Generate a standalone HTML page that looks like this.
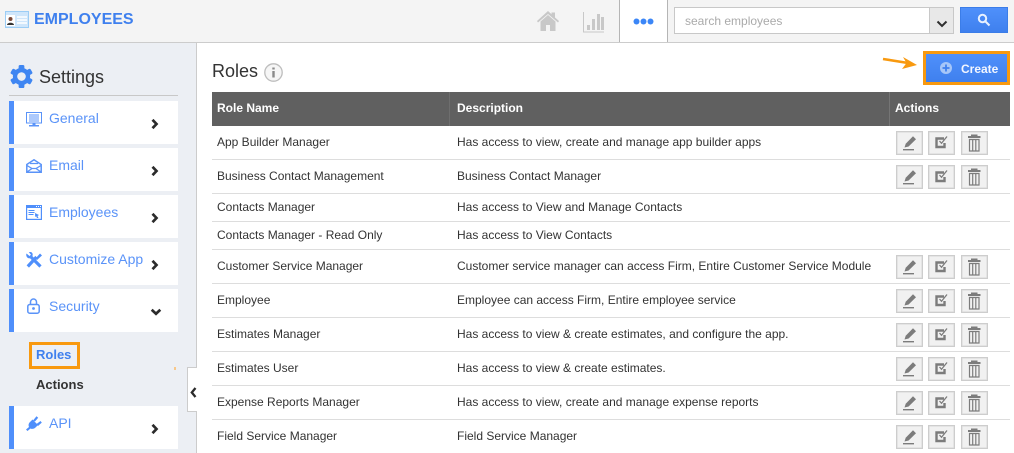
<!DOCTYPE html>
<html><head><meta charset="utf-8"><style>
html,body{margin:0;padding:0}
body{width:1014px;height:453px;position:relative;overflow:hidden;background:#fff;font-family:"Liberation Sans",sans-serif;font-size:12px;color:#333}
.a{position:absolute}
.t{position:absolute;white-space:nowrap;line-height:14px}
.m{position:absolute;left:9px;width:169px;height:43px;background:#fff;border-left:5px solid #4f8ffb;box-sizing:border-box}
.ml{position:absolute;left:49px;font-size:14px;line-height:16px;color:#5a93f8;white-space:nowrap}
.ln{position:absolute;left:212px;width:798px;height:1px;background:#ddd}
.b{position:absolute;width:26px;height:24px;box-sizing:border-box;background:#f1f1f1;border:1px solid #cdcdcd;box-shadow:inset 0 0 0 .5px #d8d8d8}
.b svg{position:absolute;left:0;top:0}
</style></head><body>
<svg width="0" height="0" style="position:absolute">
<symbol id="e" viewBox="0 0 26 22"><path d="M7.500 15.500l1.200-3.800 7.300-7.400 3 3-7.400 7.200z" fill="#7c7c7c"/><rect x="6" y="17" width="11" height="1.400" fill="#7c7c7c"/></symbol>
<symbol id="c" viewBox="0 0 26 22"><path d="M15 6.500H7.500v8.500h8v-4" fill="none" stroke="#7c7c7c" stroke-width="2.400"/><path d="M10.500 9l2 2.300L18 4.500" fill="none" stroke="#7c7c7c" stroke-width="1.300"/></symbol>
<symbol id="d" viewBox="0 0 26 22"><rect x="6" y="4" width="12.500" height="2" fill="#7c7c7c"/><rect x="9" y="2.500" width="6.500" height="1.800" fill="#7c7c7c"/><path d="M7.500 7.500h9.500v11.500h-9.500zM10.700 7.500v11.500M13.800 7.500v11.500" fill="none" stroke="#7c7c7c" stroke-width="1.200"/></symbol>
<symbol id="r" viewBox="0 0 10 12"><path d="M2.500 1.800l4 4.200-4 4.200" fill="none" stroke="#2b2b2b" stroke-width="2.700"/></symbol>
</svg>

<!-- top bar -->
<div class="a" style="left:0;top:0;width:1014px;height:42px;background:#f4f4f4"></div>
<div class="a" style="left:0;top:42px;width:1014px;height:1px;background:#ccc"></div>
<svg class="a" style="left:5px;top:11px" width="24" height="17" viewBox="0 0 24 17"><rect x=".5" y=".5" width="23" height="16" fill="#cfe6fb" stroke="#9ccdf5"/><rect x="1" y="4" width="9" height="11" fill="#fff"/><circle cx="5.500" cy="8" r="2" fill="#7a4a3a"/><path d="M2 14c0-3 7-3 7 0z" fill="#333"/><path d="M12 6h10M12 9h10M12 12h10" stroke="#fff" stroke-width="1.500"/></svg>
<div class="t" style="left:34px;top:11px;font-size:16px;line-height:18px;font-weight:bold;color:#3f80ee">EMPLOYEES</div>
<svg class="a" style="left:537px;top:11px" width="22" height="20" viewBox="0 0 22 20"><path d="M0 10L11 0l3.500 3.200V1.500h3.500v5L22 10l-1 1.500L11 3 1 11.500z" fill="#c8c8c8"/><path d="M3.500 10.500L11 4l7.500 6.500V20H13v-6H9v6H3.500z" fill="#c8c8c8"/></svg>
<svg class="a" style="left:583px;top:12px" width="22" height="21" viewBox="0 0 22 21"><path d="M.5 0v20H21" fill="none" stroke="#c8c8c8"/><rect x="4" y="13" width="3" height="5" fill="#c8c8c8"/><rect x="9" y="7" width="3" height="11" fill="#c8c8c8"/><rect x="14" y="2" width="3" height="16" fill="#c8c8c8"/><rect x="18" y="5" width="3" height="13" fill="#c8c8c8"/></svg>
<div class="a" style="left:619px;top:0;width:47px;height:42px;background:#fff;border-left:1px solid #b5b5b5;border-right:1px solid #b5b5b5"></div>
<svg class="a" style="left:633px;top:18px" width="21" height="7" viewBox="0 0 21 7"><circle cx="3.500" cy="3.500" r="3" fill="#3b86f7"/><circle cx="10.500" cy="3.500" r="3" fill="#3b86f7"/><circle cx="17.500" cy="3.500" r="3" fill="#3b86f7"/></svg>
<div class="a" style="left:674px;top:7px;width:280px;height:27px;box-sizing:border-box;background:#fff;border:1px solid #c8c8c8"></div>
<div class="a" style="left:929px;top:8px;width:24px;height:25px;background:#e8e8e8;border-left:1px solid #c8c8c8;box-sizing:border-box"></div>
<svg class="a" style="left:936px;top:20px" width="12" height="8" viewBox="0 0 12 8"><path d="M1.500 1.500L6 6l4.500-4.500" fill="none" stroke="#2f2f2f" stroke-width="2"/></svg>
<div class="t" style="left:685px;top:14px;color:#aaa;font-size:12px">search employees</div>
<div class="a" style="left:960px;top:7px;width:48px;height:26px;box-sizing:border-box;background:linear-gradient(#4f90fb,#3f80ee);border:1px solid #3b7de8"></div>
<svg class="a" style="left:977px;top:13px" width="14" height="14" viewBox="0 0 14 14"><circle cx="5.500" cy="5.500" r="3.700" fill="none" stroke="#e8f1ff" stroke-width="2"/><path d="M8.500 8.500l4 4" stroke="#e8f1ff" stroke-width="2"/></svg>

<!-- sidebar -->
<div class="a" style="left:0;top:43px;width:196px;height:410px;background:#eceff4;border-right:1px solid #ccc"></div>
<svg class="a" style="left:10px;top:65px" width="23" height="23" viewBox="0 0 24 24"><g fill="#3f86f2"><rect x="9" y="0" width="6" height="24" rx="1.500"/><rect x="9" y="0" width="6" height="24" rx="1.500" transform="rotate(60 12 12)"/><rect x="9" y="0" width="6" height="24" rx="1.500" transform="rotate(120 12 12)"/></g><circle cx="12" cy="12" r="6.500" fill="none" stroke="#3f86f2" stroke-width="5"/><circle cx="12" cy="12" r="4.500" fill="#eceff4"/></svg>
<div class="t" style="left:39px;top:67px;font-size:18px;line-height:21px;color:#333">Settings</div>
<div class="a" style="left:9px;top:95px;width:169px;height:1px;background:#c8c8c8"></div>

<div class="m" style="top:101px"></div><div class="m" style="top:148px"></div><div class="m" style="top:195px"></div><div class="m" style="top:242px"></div><div class="m" style="top:289px"></div><div class="m" style="top:406px"></div>
<div class="ml" style="top:110px">General</div>
<div class="ml" style="top:157px">Email</div>
<div class="ml" style="top:204px">Employees</div>
<div class="ml" style="top:251px">Customize App</div>
<div class="ml" style="top:298px">Security</div>
<div class="ml" style="top:415px">API</div>

<svg class="a" style="left:26px;top:112px" width="16" height="15" viewBox="0 0 16 15"><rect x=".5" y=".5" width="15" height="10.500" fill="#fff" stroke="#5a93f8"/><path d="M3 3h10M3 5h10M3 7h10M3 9h10" stroke="#5a93f8"/><path d="M6.500 11h3v2h-3zM3 13h10v1.500H3z" fill="#5a93f8"/></svg>
<svg class="a" style="left:26px;top:159px" width="16" height="14" viewBox="0 0 16 14"><path d="M.8 5.500L8 .8l7.200 4.700v7.700H.8z" fill="#fff" stroke="#5a93f8" stroke-width="1.500"/><path d="M1 6.500l5 3h4l5-3M1 13l5-3.500M15 13l-5-3.500M4 4.500h8" fill="none" stroke="#5a93f8" stroke-width="1.300"/></svg>
<svg class="a" style="left:26px;top:205px" width="16" height="15" viewBox="0 0 16 15"><rect x=".6" y=".6" width="14.800" height="13.800" fill="#fff" stroke="#4f8ffb" stroke-width="1.200"/><rect x="0" y="0" width="16" height="3" fill="#4f8ffb"/><path d="M10 1.500h1M12 1.500h1M14 1.500h1" stroke="#fff"/><path d="M2.500 5.500h6M2.500 7.500h6M2.500 9.500h5" stroke="#4f8ffb" stroke-width="1.100"/><path d="M9 8l4 2-1.500 1 1 2h-1.500l-.8-1.800-1 .8z" fill="#4f8ffb"/></svg>
<svg class="a" style="left:26px;top:252px" width="16" height="16" viewBox="0 0 16 16"><path d="M1.800 14.500L10.500 5" stroke="#4f8ffb" stroke-width="3.200"/><path d="M9.500 6.500l4.500-5 2 2-5 4.500z" fill="#4f8ffb"/><path d="M14.500 14.500L5 5" stroke="#4f8ffb" stroke-width="3.200"/><path d="M.5 1.500L3.500 4 5 2.800 2.800.3c2.500-1 4.500.7 3.700 3.500L4 6.300C1.500 6.800-.5 4 .5 1.500z" fill="#4f8ffb"/></svg>
<svg class="a" style="left:27px;top:298px" width="13" height="16" viewBox="0 0 13 16"><path d="M3.500 7V4a3 3 0 0 1 6 0v3" fill="none" stroke="#5a93f8" stroke-width="1.500"/><rect x=".8" y="6.500" width="11.400" height="8.700" rx="2" fill="#fff" stroke="#5a93f8" stroke-width="1.500"/><circle cx="6.500" cy="10.500" r="1.400" fill="#5a93f8"/></svg>
<svg class="a" style="left:26px;top:416px" width="16" height="15" viewBox="0 0 16 15"><path d="M0 13.500l3-2.500C2 8.500 3 7 4 6l2.500-2.500 5.500 5.500-2.500 2.500c-1 1-3 2-5 1l-3 2.500z" fill="#4f8ffb"/><path d="M7 4.500L10.500.3l1.700 1.400L9 5.500zM10.500 8l4-3 1.300 1.600L12 10z" fill="#4f8ffb"/></svg>

<svg class="a" style="left:150px;top:118px" width="10" height="12" viewBox="0 0 10 12"><use href="#r"/></svg>
<svg class="a" style="left:150px;top:165px" width="10" height="12" viewBox="0 0 10 12"><use href="#r"/></svg>
<svg class="a" style="left:150px;top:212px" width="10" height="12" viewBox="0 0 10 12"><use href="#r"/></svg>
<svg class="a" style="left:150px;top:259px" width="10" height="12" viewBox="0 0 10 12"><use href="#r"/></svg>
<svg class="a" style="left:150px;top:423px" width="10" height="12" viewBox="0 0 10 12"><use href="#r"/></svg>
<svg class="a" style="left:150px;top:308px" width="12" height="9" viewBox="0 0 12 9"><path d="M1.700 1.800L6 5.800l4.300-4" fill="none" stroke="#2b2b2b" stroke-width="2.700"/></svg>

<div class="a" style="left:29px;top:342px;width:51px;height:27px;box-sizing:border-box;border:3px solid #f8990f"></div>
<div class="t" style="left:36px;top:348px;font-size:13px;font-weight:bold;color:#3f80ee">Roles</div>
<div class="t" style="left:36px;top:378px;font-size:13px;font-weight:bold;color:#333">Actions</div>
<div class="a" style="left:174px;top:367px;width:2px;height:3px;background:#f8c88a"></div>
<div class="a" style="left:187px;top:367px;width:10px;height:45px;box-sizing:border-box;background:#fff;border:1px solid #ccc;border-right:0"></div>
<svg class="a" style="left:190px;top:387px" width="7" height="11" viewBox="0 0 7 11"><path d="M5.500 1L1.800 5.500l3.700 4.500" fill="none" stroke="#2b2b2b" stroke-width="2.300"/></svg>

<!-- main -->
<div class="t" style="left:212px;top:61px;font-size:18px;line-height:21px;color:#333">Roles</div>
<svg class="a" style="left:264px;top:63px" width="19" height="19" viewBox="0 0 19 19"><circle cx="9.500" cy="9.500" r="8.700" fill="#f6f6f6" stroke="#bdbdbd" stroke-width="1.300"/><rect x="8.300" y="4.500" width="2.400" height="2" fill="#8a8a8a"/><rect x="8.300" y="8" width="2.400" height="6.500" fill="#8a8a8a"/></svg>
<svg class="a" style="left:882px;top:56px" width="36" height="14" viewBox="0 0 36 14"><path d="M1 3l25 4" stroke="#f8990f" stroke-width="2.600"/><path d="M35 9L21 1l3.500 6L20 13z" fill="#f8990f"/></svg>
<div class="a" style="left:923px;top:51px;width:87px;height:34px;box-sizing:border-box;background:linear-gradient(#4f90fb,#3f80ee);border:3px solid #f8990f"></div>
<svg class="a" style="left:940px;top:62px" width="12" height="12" viewBox="0 0 12 12"><circle cx="6" cy="6" r="6" fill="#a6c6f8"/><path d="M6 2.500v7M2.500 6h7" stroke="#3f80ee" stroke-width="1.800"/></svg>
<div class="t" style="left:961px;top:62px;font-weight:bold;color:#f2f6ff">Create</div>

<div class="a" style="left:212px;top:92px;width:798px;height:34px;background:#606060"></div>
<div class="a" style="left:449px;top:92px;width:1px;height:34px;background:#6e6e6e"></div>
<div class="a" style="left:889px;top:92px;width:1px;height:34px;background:#757575"></div>
<div class="t" style="left:217px;top:101px;font-weight:bold;color:#fff">Role Name</div>
<div class="t" style="left:457px;top:101px;font-weight:bold;color:#fff">Description</div>
<div class="t" style="left:895px;top:101px;font-weight:bold;color:#fff">Actions</div>

<div class="ln" style="top:159px"></div><div class="ln" style="top:193px"></div><div class="ln" style="top:221px"></div><div class="ln" style="top:249px"></div><div class="ln" style="top:283px"></div><div class="ln" style="top:317px"></div><div class="ln" style="top:351px"></div><div class="ln" style="top:385px"></div><div class="ln" style="top:419px"></div>

<div class="t" style="left:217px;top:135px">App Builder Manager</div><div class="t" style="left:457px;top:135px">Has access to view, create and manage app builder apps</div>
<div class="t" style="left:217px;top:169px">Business Contact Management</div><div class="t" style="left:457px;top:169px">Business Contact Manager</div>
<div class="t" style="left:217px;top:200px">Contacts Manager</div><div class="t" style="left:457px;top:200px">Has access to View and Manage Contacts</div>
<div class="t" style="left:217px;top:228px">Contacts Manager - Read Only</div><div class="t" style="left:457px;top:228px">Has access to View Contacts</div>
<div class="t" style="left:217px;top:259px">Customer Service Manager</div><div class="t" style="left:457px;top:259px">Customer service manager can access Firm, Entire Customer Service Module</div>
<div class="t" style="left:217px;top:293px">Employee</div><div class="t" style="left:457px;top:293px">Employee can access Firm, Entire employee service</div>
<div class="t" style="left:217px;top:327px">Estimates Manager</div><div class="t" style="left:457px;top:327px">Has access to view &amp; create estimates, and configure the app.</div>
<div class="t" style="left:217px;top:361px">Estimates User</div><div class="t" style="left:457px;top:361px">Has access to view &amp; create estimates.</div>
<div class="t" style="left:217px;top:395px">Expense Reports Manager</div><div class="t" style="left:457px;top:395px">Has access to view, create and manage expense reports</div>
<div class="t" style="left:217px;top:429px">Field Service Manager</div><div class="t" style="left:457px;top:429px">Field Service Manager</div>

<div class="b" style="left:896px;top:131px;width:27px"><svg width="26" height="22"><use href="#e"/></svg></div><div class="b" style="left:928px;top:131px;width:27px"><svg width="26" height="22"><use href="#c"/></svg></div><div class="b" style="left:961px;top:131px;width:27px"><svg width="26" height="22"><use href="#d"/></svg></div>
<div class="b" style="left:896px;top:165px;width:27px"><svg width="26" height="22"><use href="#e"/></svg></div><div class="b" style="left:928px;top:165px;width:27px"><svg width="26" height="22"><use href="#c"/></svg></div><div class="b" style="left:961px;top:165px;width:27px"><svg width="26" height="22"><use href="#d"/></svg></div>
<div class="b" style="left:896px;top:255px;width:27px"><svg width="26" height="22"><use href="#e"/></svg></div><div class="b" style="left:928px;top:255px;width:27px"><svg width="26" height="22"><use href="#c"/></svg></div><div class="b" style="left:961px;top:255px;width:27px"><svg width="26" height="22"><use href="#d"/></svg></div>
<div class="b" style="left:896px;top:289px;width:27px"><svg width="26" height="22"><use href="#e"/></svg></div><div class="b" style="left:928px;top:289px;width:27px"><svg width="26" height="22"><use href="#c"/></svg></div><div class="b" style="left:961px;top:289px;width:27px"><svg width="26" height="22"><use href="#d"/></svg></div>
<div class="b" style="left:896px;top:323px;width:27px"><svg width="26" height="22"><use href="#e"/></svg></div><div class="b" style="left:928px;top:323px;width:27px"><svg width="26" height="22"><use href="#c"/></svg></div><div class="b" style="left:961px;top:323px;width:27px"><svg width="26" height="22"><use href="#d"/></svg></div>
<div class="b" style="left:896px;top:357px;width:27px"><svg width="26" height="22"><use href="#e"/></svg></div><div class="b" style="left:928px;top:357px;width:27px"><svg width="26" height="22"><use href="#c"/></svg></div><div class="b" style="left:961px;top:357px;width:27px"><svg width="26" height="22"><use href="#d"/></svg></div>
<div class="b" style="left:896px;top:391px;width:27px"><svg width="26" height="22"><use href="#e"/></svg></div><div class="b" style="left:928px;top:391px;width:27px"><svg width="26" height="22"><use href="#c"/></svg></div><div class="b" style="left:961px;top:391px;width:27px"><svg width="26" height="22"><use href="#d"/></svg></div>
<div class="b" style="left:896px;top:425px;width:27px"><svg width="26" height="22"><use href="#e"/></svg></div><div class="b" style="left:928px;top:425px;width:27px"><svg width="26" height="22"><use href="#c"/></svg></div><div class="b" style="left:961px;top:425px;width:27px"><svg width="26" height="22"><use href="#d"/></svg></div>
</body></html>
